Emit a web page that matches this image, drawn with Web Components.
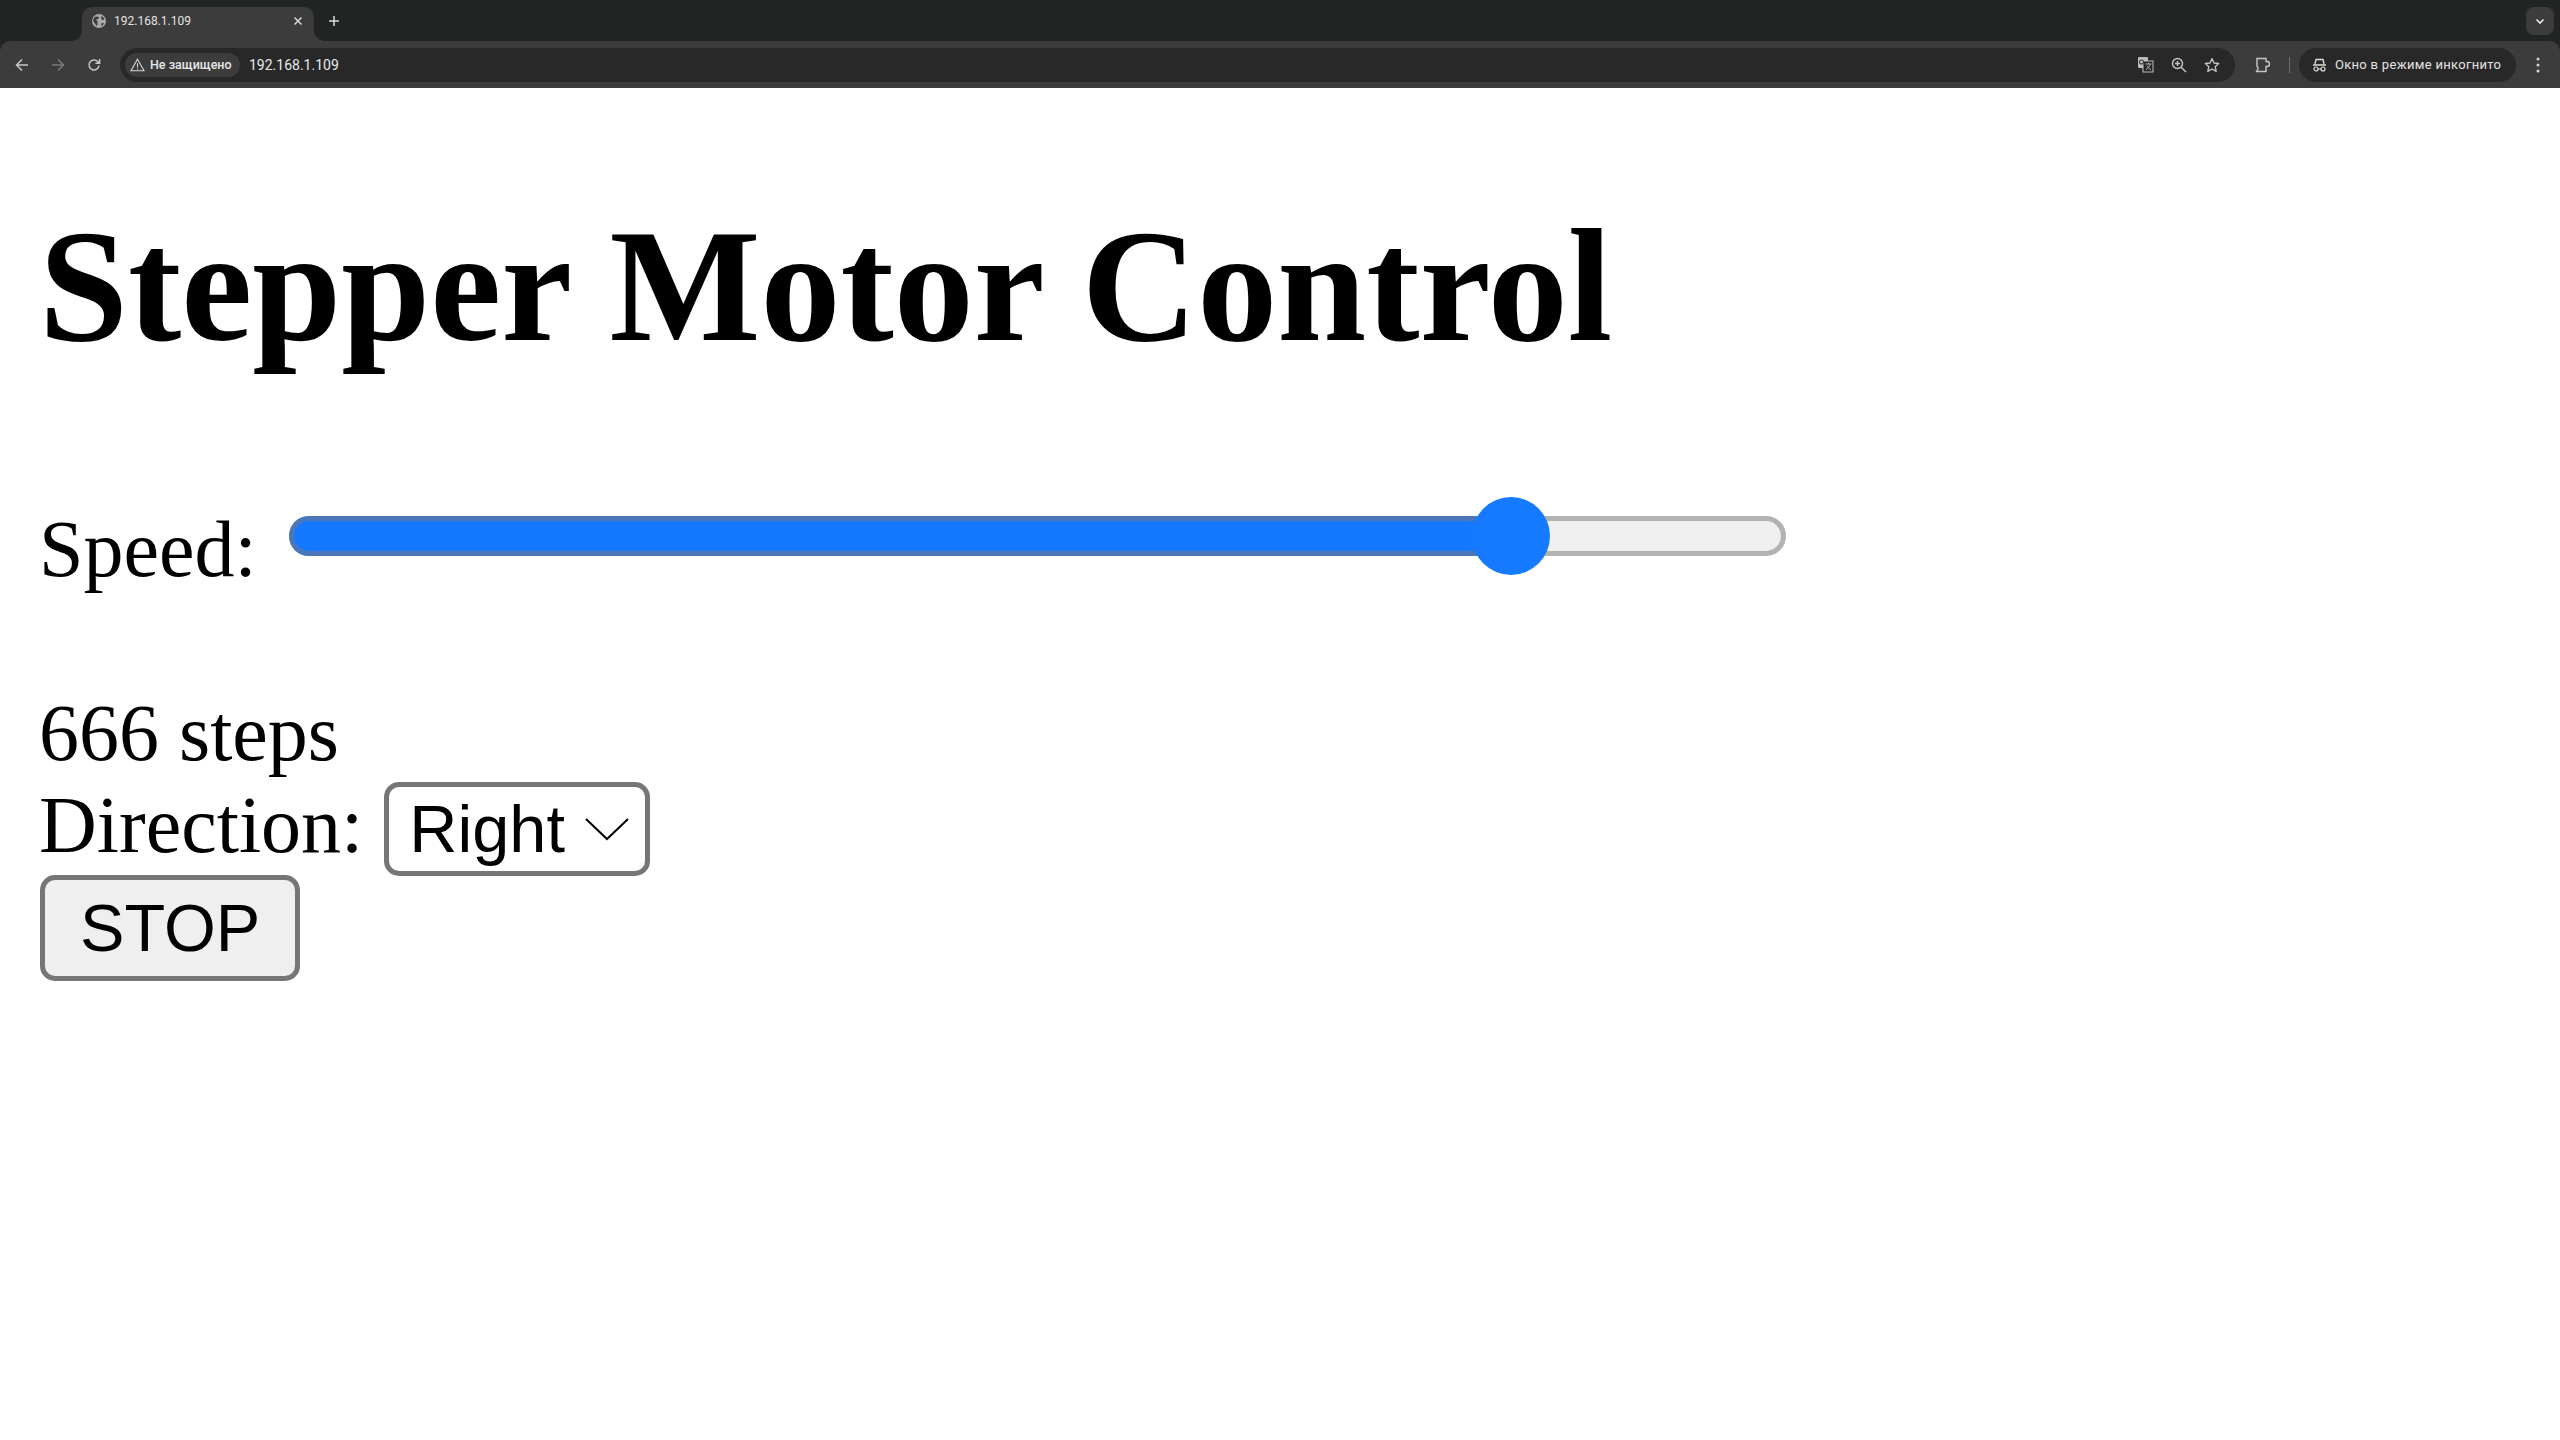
<!DOCTYPE html>
<html>
<head>
<meta charset="utf-8">
<title>192.168.1.109</title>
<style>
  html, body { margin: 0; padding: 0; background: #fff; height: 100%; overflow: hidden; }
</style>
</head>
<body>
<browser-bar></browser-bar>
<motor-page></motor-page>

<script>
class BrowserBar extends HTMLElement {
  constructor() {
    super();
    this.shadowDOM = this.attachShadow({ mode: "open" });
  }
  connectedCallback() {
    this.shadowDOM.innerHTML = `
    <style>
      :host { display: block; font-family: Roboto, "Noto Sans", sans-serif; color: #e6e8e8; background: #202423; }
      * { box-sizing: border-box; }
      svg { display: block; flex: none; }
      .strip { height: 41px; display: flex; align-items: flex-end; padding-left: 82px; padding-right: 6px; }
      .tab { position: relative; width: 232px; height: 34px; background: #3c3c3c; border-radius: 10px 10px 0 0;
        display: flex; align-items: center; padding: 0 10px 6px 9px; font-size: 12px; color: #e3e3e3; }
      .tab::before, .tab::after { content: ""; position: absolute; bottom: 0; width: 10px; height: 10px; }
      .tab::before { left: -10px; background: radial-gradient(circle at 0 0, #202423 9.5px, #3c3c3c 10px); }
      .tab::after { right: -10px; background: radial-gradient(circle at 100% 0, #202423 9.5px, #3c3c3c 10px); }
      .tab .title { margin-left: 7px; flex: 1; }
      .plus { margin-left: 13px; align-self: center; }
      .more { margin-left: auto; align-self: flex-start; margin-top: 7px; width: 28px; height: 28px; border-radius: 8px; background: #3c3c3c;
        display: flex; align-items: center; justify-content: center; }
      .tools { height: 47px; background: #3c3c3c; border-radius: 10px 10px 0 0; display: flex; align-items: center; padding: 0 0 0 15px; }
      .nav { display: flex; align-items: center; gap: 22px; width: 105px; }
      .omni { width: 2115px; height: 34px; border-radius: 17px; background: #282828; display: flex; align-items: center; padding: 0 0 0 5px; }
      .chip { height: 24px; border-radius: 12px; background: #3c3c3c; display: flex; align-items: center; gap: 5px; padding: 0 0 0 5px; font-size: 12.5px; font-weight: 500; width: 115px; white-space: nowrap; }
      .url { margin-left: 9px; font-size: 14px; color: #e8e8e8; }
      .omni-icons { margin-left: auto; display: flex; align-items: center; gap: 17px; padding-right: 15px; }
      .ext { margin-left: 20px; }
      .sep { width: 1px; height: 16px; background: #6b6b6b; margin: 0 9px 0 18px; }
      .incog { width: 217px; height: 34px; border-radius: 17px; background: #282828; display: flex; align-items: center; gap: 8px; padding-left: 13px; font-size: 13px; color: #e3e3e3; letter-spacing: .3px; white-space: nowrap; }
      .dots { margin-left: 19px; }
    </style>
    <div class="strip">
      <div class="tab">
        <svg width="16" height="16" viewBox="0 0 16 16"><circle cx="8" cy="8" r="7" fill="#a8abad"/><path d="M3.500 4 7 3.500l1 1.200-1 1.200L5 6.500l1.500 2v3.200L5.600 13 3.500 10 2 7.500zM10.500 3l2 1.500.8 2.200-1.800.3L10 5zM10.500 10l2.500.2-1.500 2.300-1.300.4z" fill="#3c3c3c"/></svg>
        <span class="title">192.168.1.109</span>
        <svg width="12" height="12" viewBox="0 0 12 12"><path d="M2.500 2.500l7 7M9.500 2.500l-7 7" stroke="#d8d8d8" stroke-width="1.500"/></svg>
      </div>
      <svg class="plus" width="14" height="14" viewBox="0 0 14 14"><path d="M7 2v10M2 7h10" stroke="#d8dada" stroke-width="1.500"/></svg>
      <div class="more"><svg width="12" height="12" viewBox="0 0 12 12"><path d="M2.500 4.500 6 8l3.500-3.500" fill="none" stroke="#e6e6e6" stroke-width="1.600"/></svg></div>
    </div>
    <div class="tools">
      <div class="nav">
        <svg width="14" height="14" viewBox="0 0 14 14"><path d="M13 7H2M7 1.500 1.500 7 7 12.500" fill="none" stroke="#c7c7c7" stroke-width="1.500"/></svg>
        <svg width="14" height="14" viewBox="0 0 14 14"><path d="M1 7h11M7 1.500 12.500 7 7 12.500" fill="none" stroke="#7a7a7a" stroke-width="1.500"/></svg>
        <svg width="14" height="14" viewBox="0 0 14 14"><path d="M12 7.500A5 5 0 1 1 10.400 3.300L12.400 5M12.600 1v4.200H8.400" fill="none" stroke="#c7c7c7" stroke-width="1.500"/></svg>
      </div>
      <div class="omni">
        <div class="chip">
          <svg width="15" height="14" viewBox="0 0 15 14"><path d="M7.500 1.200 14 12.800H1zM7.500 5.200v4M7.500 10.200v1.200" fill="none" stroke="#d6d6d6" stroke-width="1.100"/></svg>
          <span>Не защищено</span>
        </div>
        <span class="url">192.168.1.109</span>
        <div class="omni-icons">
          <svg width="17" height="17" viewBox="0 0 17 17"><rect x="1" y="1" width="10" height="11" rx="1" fill="#bdbdbd"/><rect x="6" y="5" width="10" height="11" fill="#282828" stroke="#bdbdbd"/><path d="M8.500 8h6M11.500 7v1M9 13.500c2-1 3.600-3 4-5.500M10 10c.8 1.600 2.200 3 4 3.600" fill="none" stroke="#bdbdbd" stroke-width=".9"/><circle cx="4.500" cy="6" r="2" fill="none" stroke="#3c3c3c" stroke-width="1.100"/></svg>
          <svg width="16" height="16" viewBox="0 0 16 16"><circle cx="6.500" cy="6.500" r="5" fill="none" stroke="#c7c7c7" stroke-width="1.400"/><path d="M10.200 10.200 15 15M4 6.500h5M6.500 4v5" fill="none" stroke="#c7c7c7" stroke-width="1.400"/></svg>
          <svg width="16" height="16" viewBox="0 0 16 16"><path d="m8 1.600 2 4.400 4.700.5-3.500 3.200 1 4.700L8 12l-4.200 2.400 1-4.700L1.300 6.500 6 6z" fill="none" stroke="#c7c7c7" stroke-width="1.300" stroke-linejoin="round"/></svg>
        </div>
      </div>
      <svg class="ext" width="16" height="16" viewBox="0 0 16 16"><path d="M2 1.500h9v3h1q2.500 0 2.500 2.500T12 9.500h-1v5H1.500l1.500-2.700q.4-1.600-1-2.300H2z" fill="none" stroke="#c7c7c7" stroke-width="1.400"/></svg>
      <div class="sep"></div>
      <div class="incog">
        <svg width="15" height="14" viewBox="0 0 15 14"><path d="M1 7h13M3 6l1-4.500h7L12 6" fill="none" stroke="#dedede" stroke-width="1.300"/><circle cx="4" cy="11" r="2" fill="none" stroke="#dedede" stroke-width="1.200"/><circle cx="11" cy="11" r="2" fill="none" stroke="#dedede" stroke-width="1.200"/><path d="M6 11h3" stroke="#dedede"/></svg>
        <span>Окно в режиме инкогнито</span>
      </div>
      <svg class="dots" width="6" height="16" viewBox="0 0 6 16"><circle cx="3" cy="2" r="1.500" fill="#d6d6d6"/><circle cx="3" cy="8" r="1.500" fill="#d6d6d6"/><circle cx="3" cy="14" r="1.500" fill="#d6d6d6"/></svg>
    </div>`;
  }
}

class SpeedSlider extends HTMLElement {
  constructor() {
    super();
    this.shadowDOM = this.attachShadow({ mode: "open" });
  }
  connectedCallback() {
    this.shadowDOM.innerHTML = `
    <style>
      :host { display: flex; width: 1497px; height: 80px; align-items: center; }
      * { box-sizing: border-box; }
      .track { position: relative; width: 100%; height: 40px; border-radius: 20px; background: #efefef; border: 5px solid #b2b2b2; }
      .fill { position: absolute; left: -5px; top: -5px; bottom: -5px; width: 1222px; background: #1579ff; border: 5px solid #4a77b9; border-right: 0; border-radius: 20px 0 0 20px; }
      .thumb { position: absolute; left: 1178px; top: -24px; width: 78px; height: 78px; border-radius: 50%; background: #157aff; }
    </style>
    <div class="track"><div class="fill"></div><div class="thumb"></div></div>`;
  }
}

class DirectionSelect extends HTMLElement {
  constructor() {
    super();
    this.shadowDOM = this.attachShadow({ mode: "open" });
  }
  connectedCallback() {
    this.shadowDOM.innerHTML = `
    <style>
      :host { display: inline-flex; box-sizing: border-box; width: 266px; height: 94px; align-items: center; border: 5px solid #767676; border-radius: 15px; background: #fff;
        padding-left: 20px; font: 66.67px/76px "Liberation Sans", Arial, sans-serif; color: #000; }
      svg { margin-left: 20px; flex: none; }
    </style>
    <slot></slot>
    <svg width="44" height="24" viewBox="0 0 44 24"><path d="M1 2 22 22 43 2" fill="none" stroke="#000" stroke-width="2"/></svg>`;
  }
}

class StopButton extends HTMLElement {
  constructor() {
    super();
    this.shadowDOM = this.attachShadow({ mode: "open" });
  }
  connectedCallback() {
    this.shadowDOM.innerHTML = `
    <style>
      :host { display: inline-block; box-sizing: border-box; height: 106px; padding: 5px 35px; border: 5px solid #767676; border-radius: 15px; background: #efefef;
        font: 66.67px/86px "Liberation Sans", Arial, sans-serif; color: #000; }
    </style>
    <slot></slot>`;
  }
}

class MotorPage extends HTMLElement {
  constructor() {
    super();
    this.shadowDOM = this.attachShadow({ mode: "open" });
  }
  connectedCallback() {
    this.shadowDOM.innerHTML = `
    <style>
      :host { display: block; padding: 0 39px; font: 80px/92px "Liberation Serif", "Times New Roman", serif; color: #000; }
      h1 { margin: 106px 0 0; font-size: 160px; line-height: 184px; font-weight: bold; white-space: nowrap; }
      .speed { display: flex; align-items: flex-start; margin-top: 108px; }
      .speed span { margin-right: 32px; margin-top: 17px; }
      .speed speed-slider { margin-top: 10px; }
      .readout { margin-top: 92px; }
      .dir { display: flex; align-items: center; height: 93px; }
      .dir span { margin-right: 21px; margin-top: -1px; }
      .dir direction-select { margin-top: 6px; }
      .stop { display: flex; margin-left: 1px; margin-top: 3px; }
    </style>
    <h1>Stepper Motor Control</h1>
    <div class="speed"><span>Speed:</span><speed-slider></speed-slider></div>
    <div class="readout">666 steps</div>
    <div class="dir"><span>Direction:</span><direction-select>Right</direction-select></div>
    <div class="stop"><stop-button>STOP</stop-button></div>`;
  }
}

customElements.define("browser-bar", BrowserBar);
customElements.define("speed-slider", SpeedSlider);
customElements.define("direction-select", DirectionSelect);
customElements.define("stop-button", StopButton);
customElements.define("motor-page", MotorPage);
</script>
</body>
</html>
